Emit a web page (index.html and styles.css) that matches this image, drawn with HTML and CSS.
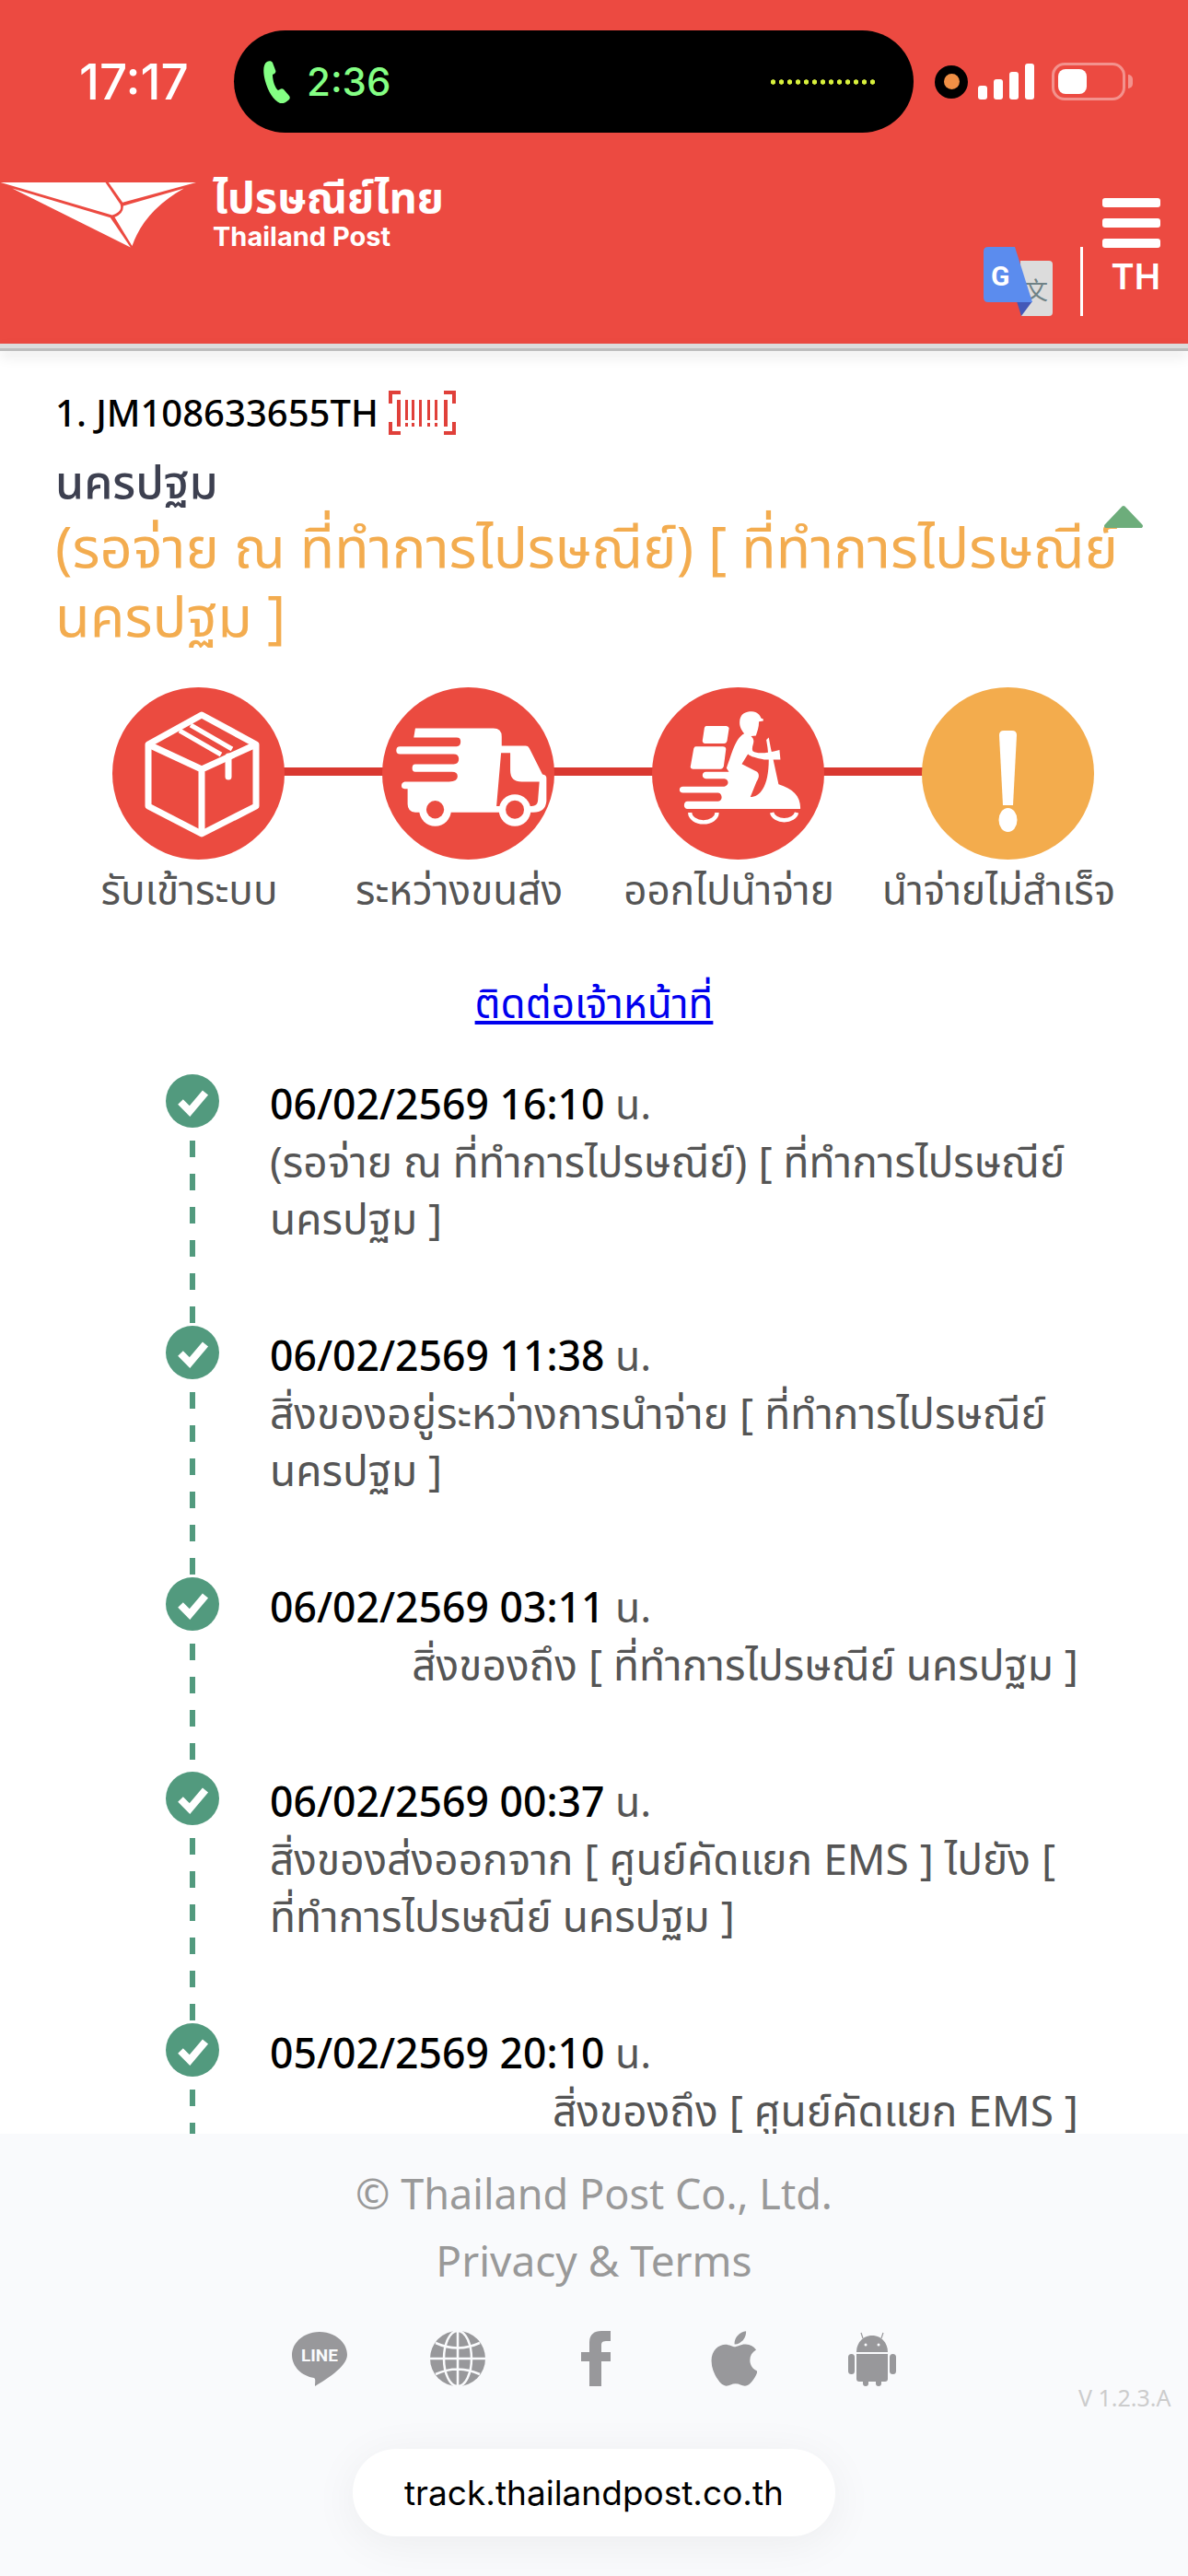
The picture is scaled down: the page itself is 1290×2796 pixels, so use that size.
FILE: index.html
```html
<!DOCTYPE html>
<html lang="th">
<head>
  <meta charset="UTF-8" />
  <meta name="viewport" content="width=device-width, initial-scale=1.0">
  <title>Thailand Post Track</title>
  <link rel="stylesheet" href="styles.css">
</head>
<body>
<div class="page">
  <header class="top">
    <div class="status">
      <span class="clock">17:17</span>
      <div class="island">
        <svg class="call-icon" viewBox="0 0 34 46"><path d="M4 1C0 3 -1 11 2 22c3 11 9 21 16 24 3 1 7-1 10-4 1-1 1-3 0-4l-6-7c-1-1-3-1-4 0l-2 1C13 30 10 22 10 15l2-1c1-1 2-2 1-4L10 2C9 0 6 0 4 1z" /></svg>
        <span class="call-time">2:36</span>
        <span class="wave"></span>
      </div>
      <span class="rec"><span></span></span>
      <div class="signal"><i class="s1"></i><i class="s2"></i><i class="s3"></i><i class="s4"></i></div>
      <div class="battery"><span></span></div>
      <span class="nub"></span>
    </div>
    <div class="brand">
      <div class="logo">
        <svg class="logo-mark" viewBox="0 75 640 215">
          <path d="M2 77H344L392 148Q402 172 366 184Z" />
          <path d="M40 97L360 192L426 289Z" />
          <path d="M354 77H640L400 143Z" />
          <path d="M374 191Q404 178 402 154L600 97Q470 170 431 285Z" />
        </svg>
        <div class="logo-text">
          <div class="logo-th">ไปรษณีย์ไทย</div>
          <div class="logo-en">Thailand Post</div>
        </div>
      </div>
      <div class="tools">
        <svg class="gt" viewBox="0 0 75 75">
          <path fill="#dcdcdc" d="M40 15H71Q75 15 75 19V71Q75 75 71 75H41Z" />
          <text class="gt-zh" x="44" y="57">文</text>
          <path fill="#4358b8" d="M36 59H53L41 75Z" />
          <path fill="#5b8cee" d="M5 0H34L53 60H5Q0 60 0 55V5Q0 0 5 0Z" />
          <text class="gt-g" x="8" y="42">G</text>
        </svg>
        <span class="sep"></span>
        <div class="menu">
          <div class="burger"><i></i><i></i><i></i></div>
          <span class="lang">TH</span>
        </div>
      </div>
    </div>
  </header>
  <div class="top-shadow"></div>

  <main class="content">
    <div class="track-no">1. JM108633655TH
      <svg class="barcode" viewBox="0 0 73 48">
        <path fill="none" stroke="#e0403a" stroke-width="4" d="M13 2H2V14M60 2H71V14M13 46H2V34M60 46H71V34" />
        <path fill="#e0403a" d="M9 10h4v29h-4zM18 10h3v22h-3zM18 35h3v4h-3zM25 10h3v22h-3zM25 35h3v4h-3zM33 10h3v29h-3zM42 10h3v22h-3zM42 35h3v4h-3zM50 10h3v22h-3zM50 35h3v4h-3zM60 10h4v29h-4z" />
      </svg>
    </div>
    <div class="province">นครปฐม</div>
    <div class="status-title">(รอจ่าย ณ ที่ทำการไปรษณีย์) [ ที่ทำการไปรษณีย์ นครปฐม ]
      <svg class="collapse" viewBox="0 0 44 26"><path d="M22 3L41 23H3Z" /></svg>
    </div>

    <div class="steps">
      <span class="steps-line"></span>
      <div class="step">
        <div class="dot">
          <svg viewBox="0 0 187 187" fill="none" stroke="#fff" stroke-width="7" stroke-linejoin="round">
            <path d="M97 30L156 62V129L97 159L39 129V62Z" />
            <path d="M39 62L97 89L156 62M97 89V159" />
            <path d="M73 47L118 73M85 41L130 67" stroke-width="5" />
            <path d="M126 75V97" stroke-linecap="round" />
          </svg>
        </div>
        <span class="step-name">รับเข้าระบบ</span>
      </div>
      <div class="step">
        <div class="dot">
          <svg viewBox="42 14 562 562" fill="#fff">
            <path d="M150 148H405Q432 148 432 175V205H510Q518 205 522 212L565 298Q578 300 578 310V385Q575 422 535 422H265Q180 422 150 422Q125 420 125 395V345H115Q105 345 105 335Q105 325 115 322H260Q288 322 288 305Q288 290 270 290H150Q140 290 140 278Q140 265 150 265H275Q292 265 292 248Q292 232 275 232H100Q88 232 88 220Q88 207 100 207H285Q298 205 298 191Q298 178 285 178H145Z" />
            <path fill="#eb4b40" d="M430 228H460V285Q460 322 497 322H555L550 385Q548 400 530 402H415Z" />
            <circle cx="215" cy="415" r="52" />
            <circle cx="215" cy="413" r="29" fill="#eb4b40" />
            <circle cx="475" cy="415" r="52" />
            <circle cx="475" cy="413" r="30" fill="#eb4b40" />
          </svg>
        </div>
        <span class="step-name">ระหว่างขนส่ง</span>
      </div>
      <div class="step">
        <div class="dot">
          <svg viewBox="919 14 562 562" fill="#fff">
            <path d="M1205 128C1205 100 1225 93 1245 93C1262 93 1272 105 1275 115L1282 118V124L1268 126C1268 145 1262 160 1258 172L1242 173C1262 190 1240 205 1248 222C1262 232 1290 230 1335 218L1338 250L1285 250C1260 245 1240 240 1232 232L1212 264L1262 290C1272 300 1266 312 1260 322L1240 372C1270 372 1300 340 1300 250L1296 210L1292 185L1300 178L1306 210L1332 330C1380 345 1405 370 1403 411H1035C1020 411 1020 386 1035 386H1135C1150 386 1150 360 1135 358H1020C1005 358 1005 338 1020 338H1155C1170 335 1172 315 1155 312H1095C1080 312 1080 290 1095 290H1170L1162 278C1180 230 1190 180 1220 165C1208 150 1205 140 1205 128Z" />
            <path d="M1096 140H1162Q1172 142 1170 150L1164 188Q1162 197 1154 197H1090Q1082 195 1084 186L1090 146Q1092 140 1096 140ZM1062 207H1150Q1162 208 1160 218L1153 272Q1150 281 1142 281H1052Q1042 280 1045 270L1055 214Q1057 207 1062 207Z" />
            <path d="M1208 300L1232 306L1210 372H1190Q1180 368 1184 358L1198 312Q1200 300 1208 300Z" />
            <path fill="none" stroke="#fff" stroke-width="13" d="M1043 423A44 31 0 0 0 1131 423M1310 423A41 29 0 0 0 1391 423" />
          </svg>
        </div>
        <span class="step-name">ออกไปนำจ่าย</span>
      </div>
      <div class="step">
        <div class="dot dot-warn">
          <svg viewBox="0 0 187 187" fill="#fff">
            <path d="M84 52Q84 47 89 47H98Q103 47 103 52L99 128H88Z" />
            <ellipse cx="93.500" cy="144" rx="10" ry="13" />
          </svg>
        </div>
        <span class="step-name">นำจ่ายไม่สำเร็จ</span>
      </div>
    </div>

    <a class="contact" href="#">ติดต่อเจ้าหน้าที่</a>

    <ul class="timeline">
      <li>
        <div class="mark"><span class="check"><svg viewBox="0 0 58 58"><path d="M16 30L26 40L43 20" /></svg></span><span class="dash"></span></div>
        <div class="info">
          <div class="when"><b>06/02/2569 16:10</b> น.</div>
          <div class="what">(รอจ่าย ณ ที่ทำการไปรษณีย์) [ ที่ทำการไปรษณีย์ นครปฐม ]</div>
        </div>
      </li>
      <li>
        <div class="mark"><span class="check"><svg viewBox="0 0 58 58"><path d="M16 30L26 40L43 20" /></svg></span><span class="dash"></span></div>
        <div class="info">
          <div class="when"><b>06/02/2569 11:38</b> น.</div>
          <div class="what">สิ่งของอยู่ระหว่างการนำจ่าย [ ที่ทำการไปรษณีย์ นครปฐม ]</div>
        </div>
      </li>
      <li>
        <div class="mark"><span class="check"><svg viewBox="0 0 58 58"><path d="M16 30L26 40L43 20" /></svg></span><span class="dash"></span></div>
        <div class="info">
          <div class="when"><b>06/02/2569 03:11</b> น.</div>
          <div class="what right">สิ่งของถึง [ ที่ทำการไปรษณีย์ นครปฐม ]</div>
        </div>
      </li>
      <li>
        <div class="mark"><span class="check"><svg viewBox="0 0 58 58"><path d="M16 30L26 40L43 20" /></svg></span><span class="dash"></span></div>
        <div class="info">
          <div class="when"><b>06/02/2569 00:37</b> น.</div>
          <div class="what">สิ่งของส่งออกจาก [ ศูนย์คัดแยก EMS ] ไปยัง [ ที่ทำการไปรษณีย์ นครปฐม ]</div>
        </div>
      </li>
      <li>
        <div class="mark"><span class="check"><svg viewBox="0 0 58 58"><path d="M16 30L26 40L43 20" /></svg></span><span class="dash"></span></div>
        <div class="info">
          <div class="when"><b>05/02/2569 20:10</b> น.</div>
          <div class="what right">สิ่งของถึง [ ศูนย์คัดแยก EMS ]</div>
        </div>
      </li>
    </ul>
  </main>

  <footer class="foot">
    <div class="copy">© Thailand Post Co., Ltd.</div>
    <div class="terms">Privacy &amp; Terms</div>
    <div class="social">
      <svg class="soc-line" viewBox="0 0 60 60">
        <path d="M30 1C14 1 0 12 0 26C0 39 11 49 24 51C26 52 25 55 25 60C35 54 60 39 60 26C60 12 46 1 30 1Z" />
        <text x="30" y="33">LINE</text>
      </svg>
      <svg class="soc-globe" viewBox="0 0 60 60">
        <circle cx="30" cy="30" r="30" />
        <g fill="none" stroke="#fafbfd" stroke-width="2.500">
          <ellipse cx="30" cy="30" rx="15" ry="30" />
          <path d="M30 0V60M0 30H60M6 13Q30 24 54 13M6 47Q30 36 54 47" />
        </g>
      </svg>
      <svg class="soc-fb" viewBox="0 0 32 60"><path d="M32 11H27C22 11 22 14 22 16V23H32V33H22V60H9V33H0V23H9V13C9 4 14 0 22 0H32Z" /></svg>
      <svg class="soc-apple" viewBox="0 30 376 452" preserveAspectRatio="none"><path d="M318.700 268.700c-.2-36.700 16.400-64.400 50-84.800-18.800-26.900-47.200-41.700-84.700-44.600-35.500-2.800-74.300 20.700-88.500 20.700-15 0-49.400-19.700-76.400-19.700C63.300 141.200 4 184.800 4 273.500q0 39.300 14.400 81.200c12.800 36.700 59 126.700 107.200 125.200 25.200-.6 43-17.900 75.800-17.900 31.800 0 48.300 17.900 76.400 17.900 48.600-.7 90.400-82.500 102.600-119.300-65.200-30.700-61.700-90-61.700-91.900zm-56.600-164.200c27.300-32.400 24.800-61.900 24-72.500-24.100 1.400-52 16.400-67.900 34.900-17.500 19.800-27.800 44.300-25.600 71.900 26.100 2 49.900-11.400 69.500-34.300z" /></svg>
      <svg class="soc-android" viewBox="0 0 52 60">
        <path d="M9 23C9 12 17 5 26 5C35 5 43 12 43 23Z" />
        <path d="M9 25H43V52Q43 55 40 55H36V57Q36 60 33 60Q30 60 30 57V55H22V57Q22 60 19 60Q16 60 16 57V55H12Q9 55 9 52Z" />
        <rect x="0" y="25" width="7" height="22" rx="3.500" />
        <rect x="45" y="25" width="7" height="22" rx="3.500" />
        <path fill="none" stroke="#98989b" stroke-width="1.200" d="M16 8L14 2M36 8L38 2" />
        <circle cx="19" cy="15" r="1.500" fill="#fafbfd" /><circle cx="33" cy="15" r="1.500" fill="#fafbfd" />
      </svg>
    </div>
    <span class="version">V 1.2.3.A</span>
    <div class="url">track.thailandpost.co.th</div>
  </footer>
</div>
</body>
</html>
```

FILE: styles.css
```css
* { margin: 0; padding: 0; box-sizing: border-box; }
body {
  font-family: "Noto Sans", "Noto Sans Thai", "Inter", sans-serif;
  background: #fff;
  color: #555;
  overflow: hidden;
}
.page {
  width: 1290px;
  height: 2796px;
  display: flex;
  flex-direction: column;
  overflow: hidden;
}

/* red header */
.top {
  height: 373px;
  background: #ec4a41;
  color: #fff;
  flex: none;
  padding-top: 33px;
}
.status {
  display: flex;
  align-items: center;
  height: 111px;
  padding-left: 86px;
}
.clock {
  width: 168px;
  font: 500 53px "Inter", sans-serif;
}
.island {
  width: 738px;
  height: 111px;
  background: #000;
  border-radius: 56px;
  display: flex;
  align-items: center;
  padding-left: 32px;
}
.call-icon { width: 34px; height: 46px; fill: #84ff84; }
.call-time {
  margin-left: 13px;
  font: 500 42px "Inter", sans-serif;
  color: #84ff84;
}
.wave {
  margin-left: 411px;
  width: 118px;
  height: 6px;
  background: radial-gradient(circle, #d8f03c 2.4px, transparent 3px) 0 0 / 9px 6px;
}
.rec {
  margin-left: 23px;
  width: 36px;
  height: 36px;
  background: #000;
  border-radius: 50%;
  display: flex;
  align-items: center;
  justify-content: center;
}
.rec span {
  width: 17px;
  height: 17px;
  border-radius: 50%;
  background: #f09045;
}
.signal {
  margin-left: 11px;
  display: flex;
  align-items: flex-end;
  gap: 7px;
  height: 39px;
}
.signal i { width: 10px; background: #fff; border-radius: 3px; }
.s1 { height: 15px; }
.s2 { height: 22px; }
.s3 { height: 30px; }
.s4 { height: 39px; }
.battery {
  margin-left: 19px;
  width: 80px;
  height: 41px;
  border: 3px solid rgba(255,255,255,0.4);
  border-radius: 14px;
  padding: 4px;
}
.battery span {
  display: block;
  width: 31px;
  height: 27px;
  background: #fff;
  border-radius: 8px;
}
.nub {
  margin-left: 3px;
  width: 5px;
  height: 15px;
  background: rgba(255,255,255,0.4);
  border-radius: 0 8px 8px 0;
}
.brand {
  display: flex;
  justify-content: space-between;
  align-items: flex-start;
  margin-top: 51px;
  padding-right: 30px;
}
.logo { display: flex; align-items: center; gap: 18px; }
.logo-mark { width: 213px; height: 72px; fill: #fff; }
.logo-text { margin-top: -7px; }
.logo-th { font-weight: 700; font-size: 47px; line-height: 50px; }
.logo-en { font: 700 29px/28px "Inter", sans-serif; margin-top: 5px; }
.tools { display: flex; align-items: flex-start; margin-top: 20px; }
.gt { width: 75px; height: 75px; display: block; margin-top: 53px; }
.gt-zh { font: 400 26px "Noto Sans CJK SC", sans-serif; fill: #6f8286; }
.gt-g { font: 700 30px "Roboto", sans-serif; fill: #fff; }
.sep { width: 3px; height: 75px; background: #fff; margin: 53px 21px 0 30px; display: block; }
.menu { width: 63px; }
.burger { display: flex; flex-direction: column; gap: 12px; margin-bottom: 16px; }
.burger i { height: 10px; background: #fff; border-radius: 3px; display: block; }
.lang { font: 600 38px/30px "Inter", sans-serif; display: block; text-align: right; }
.top-shadow {
  height: 8px;
  flex: none;
  background: linear-gradient(#dcdcdc 0 5px, #bdbdbd 5px);
  box-shadow: 0 6px 14px rgba(0,0,0,0.1);
  position: relative;
}

/* tracking */
.content {
  flex: 1;
  overflow: hidden;
  padding: 39px 60px 0;
  min-height: 0;
  position: relative;
}
.track-no {
  display: flex;
  align-items: center;
  gap: 11px;
  color: #000;
  font-size: 40px;
  font-weight: 500;
  line-height: 56px;
}
.barcode { width: 73px; height: 48px; }
.province {
  font-size: 50px;
  font-weight: 500;
  color: #3d4050;
  line-height: 66px;
  margin-top: 13px;
}
.status-title {
  font-size: 61.500px;
  line-height: 75px;
  color: #f3ac4f;
  position: relative;
}
.collapse {
  position: absolute;
  right: -12px;
  top: -7px;
  width: 44px;
  height: 26px;
  fill: #6dad7b;
  stroke: #6dad7b;
  stroke-width: 4px;
  stroke-linejoin: round;
}
.steps {
  display: grid;
  grid-template-columns: repeat(4, 293px);
  margin: 41px 0 0 9px;
  position: relative;
}
.steps-line {
  position: absolute;
  left: 146px;
  width: 880px;
  top: 87px;
  height: 9px;
  background: #d93830;
}
.step {
  display: flex;
  flex-direction: column;
  align-items: center;
  position: relative;
}
.dot {
  width: 187px;
  height: 187px;
  border-radius: 50%;
  background: #eb4b40;
}
.dot svg { display: block; width: 187px; height: 187px; }
.dot-warn { background: #f3ac4d; }
.step-name {
  font-size: 44px;
  line-height: 60px;
  margin-top: 2px;
  margin-right: 20px;
  white-space: nowrap;
}
.contact {
  display: block;
  text-align: center;
  color: #00e;
  font-size: 44px;
  line-height: 60px;
  margin-top: 63px;
}
.timeline {
  list-style: none;
  margin: 48px 0 0 120px;
}
.timeline li {
  display: grid;
  grid-template-columns: 58px 1fr;
  column-gap: 55px;
  padding-bottom: 86px;
  position: relative;
}
.mark { position: relative; }
.check {
  display: block;
  width: 58px;
  height: 58px;
  border-radius: 50%;
  background: #529a7e;
}
.check svg {
  display: block;
  fill: none;
  stroke: #fff;
  stroke-width: 8px;
}
.dash {
  position: absolute;
  left: 26px;
  top: 72px;
  bottom: -83px;
  width: 6px;
  background: repeating-linear-gradient(#529a7e 0 18px, transparent 18px 36px);
}
.info { width: 878px; margin-top: 1px; }
.when {
  font-size: 44.500px;
  line-height: 62px;
}
.when b { color: #000; font-weight: 500; }
.what {
  font-size: 46px;
  line-height: 62px;
}
.right { text-align: right; }

/* footer */
.foot {
  height: 480px;
  flex: none;
  background: #f9fafc;
  position: relative;
  text-align: center;
  padding-top: 29px;
  color: #999;
  font-size: 45px;
  line-height: 72px;
}
.terms { font-size: 46px; }
.social {
  display: flex;
  align-items: flex-start;
  justify-content: center;
  margin-top: 41px;
  height: 60px;
}
.social svg { height: 60px; fill: #98989b; display: block; }
.soc-line { width: 60px; }
.soc-line text { font: 700 19px "Roboto", sans-serif; fill: #f9fafc; text-anchor: middle; }
.soc-globe { width: 60px; margin-left: 90px; }
.soc-fb { width: 32px; margin-left: 104px; }
.soc-apple { width: 50px; margin-left: 109px; }
.soc-android { width: 52px; margin-left: 99px; }
.version {
  position: absolute;
  left: 1171px;
  top: 268px;
  font-size: 25px;
  line-height: 36px;
  color: #ccc;
}
.url {
  position: absolute;
  left: 383px;
  top: 342px;
  width: 524px;
  height: 95px;
  background: #fff;
  border-radius: 47px;
  box-shadow: 0 8px 50px rgba(0,0,0,0.06);
  color: #000;
  font: 400 37px/95px "Inter", sans-serif;
}
```
